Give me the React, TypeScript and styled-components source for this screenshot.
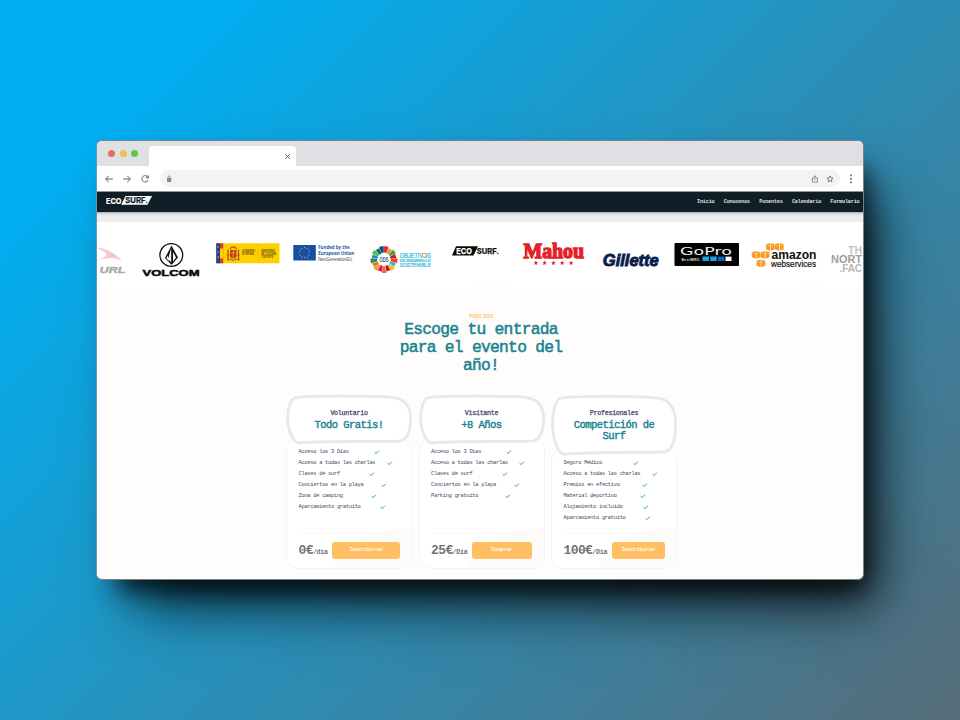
import React from "react";
import styled, { createGlobalStyle } from "styled-components";

const Global = createGlobalStyle`
  * { box-sizing: border-box; }
  html, body { margin: 0; padding: 0; }
  body { font-family: "Liberation Mono", monospace; }
`;

const Desktop = styled.main`
  width: 960px;
  height: 720px;
  overflow: hidden;
  padding: 140px 0 0 96px;
  background: linear-gradient(135deg, #00aff3 0%, #00aff3 12%, #536f7e 96%, #566d7a 100%);
`;

const Browser = styled.section`
  width: 768px;
  height: 440px;
  border-radius: 6px;
  box-shadow: 12px 20px 24px -10px rgba(0, 0, 0, 0.78),
    26px 38px 54px -14px rgba(0, 0, 0, 0.78);
`;

const Viewport = styled.div`
  display: flex;
  flex-direction: column;
  width: 100%;
  height: 100%;
  overflow: hidden;
  border: 1px solid #77818a;
  border-left-color: #6c98ad;
  border-radius: 6px;
  background: #fefdfb;
`;

const TabStrip = styled.div`
  display: flex;
  flex: none;
  height: 25px;
  padding: 5px 0 0 11px;
  background: #dee0e4;
`;

const Lights = styled.div`
  display: flex;
  gap: 4.6px;
  padding-top: 4px;
  width: 41px;
`;

const Light = styled.span<{ $color: string }>`
  width: 7px;
  height: 7px;
  border-radius: 50%;
  background: ${(p) => p.$color};
`;

const Tab = styled.div`
  display: flex;
  justify-content: flex-end;
  align-items: center;
  width: 147px;
  height: 20px;
  padding-right: 5px;
  border-radius: 4px 4px 0 0;
  background: #fff;
`;

const Toolbar = styled.div`
  display: flex;
  flex: none;
  align-items: center;
  height: 26px;
  padding: 0 8px 0 7px;
  background: #fff;
  border-bottom: 1px solid #8d9396;
`;

const Glyph = styled.svg`
  flex: none;
  fill: none;
  stroke: #5f6368;
  stroke-width: 1;
`;

const NavGlyphs = styled.div`
  display: flex;
  gap: 8px;
  width: 56px;
`;

const Address = styled.div`
  display: flex;
  align-items: center;
  width: 680px;
  height: 17px;
  padding: 0 6px;
  border-radius: 9px;
  background: #f1f3f4;
`;

const Spacer = styled.span`
  flex: 1;
`;

const SiteNav = styled.header`
  display: flex;
  flex: none;
  align-items: center;
  height: 20px;
  padding: 0 3.5px 0 9px;
  background: #101e28;
`;

const NavLinks = styled.nav`
  display: flex;
  flex: 1;
  justify-content: flex-end;
  gap: 9.3px;
  font-size: 5.2px;
  font-weight: 700;
  letter-spacing: -0.2px;
  line-height: 8px;
  color: #e6e0da;
`;

const NavShade = styled.div`
  flex: none;
  height: 10px;
  background: linear-gradient(#a9adaf 0, #dedede 2px, #ececec 4px, #eee 9.5px, #fff 10px);
`;

const Sponsors = styled.section`
  flex: none;
  height: 76px;
  padding-top: 16px;
  overflow: hidden;
  background: #fff;
`;

const Track = styled.div`
  display: flex;
  width: 843px;
  margin-left: -40.6px;
`;

const Logo = styled.svg`
  flex: none;
  width: 76.6px;
  height: 44px;
  overflow: visible;
  font-family: "Liberation Sans", sans-serif;
`;

const Wave = styled.svg`
  display: block;
  flex: none;
  width: 100%;
  height: 12px;
  margin-top: -12px;
`;

const Intro = styled.section`
  flex: none;
  padding: 14.5px 0 0 2px;
  text-align: center;
  height: 97px;
`;

const Kicker = styled.p`
  margin: 0;
  font-size: 6px;
  line-height: 8px;
  font-weight: 700;
  letter-spacing: -0.2px;
  color: #ffc982;
`;

const Heading = styled.h1`
  width: 180px;
  margin: 0 auto;
  font-size: 16.3px;
  line-height: 18px;
  font-weight: 400;
  letter-spacing: -0.73px;
  -webkit-text-stroke: 0.5px #168391;
  color: #168391;
`;

const Plans = styled.section`
  display: flex;
  gap: 6.5px;
  height: 174px;
  padding-left: 189px;
`;

const Plan = styled.article`
  position: relative;
  display: flex;
  flex-direction: column;
  width: 126px;
  height: 174px;
`;

const Body = styled.div<{ $top: number }>`
  position: absolute;
  inset: ${(p) => p.$top}px 0 0 0;
  overflow: hidden;
  border: 1px solid #f5f4f3;
  border-radius: 12px;
  background: #fff;

  &::after {
    content: "";
    position: absolute;
    left: 42px;
    bottom: -84px;
    width: 150px;
    height: 124px;
    border-radius: 50%;
    background: #fdfcfb;
  }
`;

const PlanHead = styled.header<{ $height: number }>`
  position: relative;
  flex: none;
  height: ${(p) => p.$height}px;
  padding-top: 13.5px;
  text-align: center;
`;

const Blob = styled.svg`
  position: absolute;
  inset: 0;
  width: 100%;
  height: 100%;
  overflow: visible;
`;

const Audience = styled.p`
  position: relative;
  margin: 0;
  font-size: 6.7px;
  line-height: 9px;
  font-weight: 400;
  letter-spacing: -0.29px;
  -webkit-text-stroke: 0.25px #4b4763;
  color: #4b4763;
`;

const PlanTitle = styled.h2`
  position: relative;
  width: 100px;
  margin: 2px auto 0;
  font-size: 10.5px;
  line-height: 11px;
  font-weight: 400;
  letter-spacing: -0.55px;
  -webkit-text-stroke: 0.4px #168391;
  color: #168391;
`;

const Features = styled.ul`
  position: relative;
  flex: 1;
  margin: 0;
  padding: 2.5px 0 0 12.5px;
  list-style: none;
`;

const Feature = styled.li<{ $mark: number }>`
  display: grid;
  grid-template-columns: ${(p) => p.$mark}px 6px;
  align-items: center;
  height: 11.05px;
  font-size: 5.4px;
  letter-spacing: -0.28px;
  white-space: nowrap;
  color: #4b4763;
`;

const Purchase = styled.footer`
  position: relative;
  display: flex;
  align-items: center;
  justify-content: space-between;
  height: 35px;
  margin: 0 12.5px 1px 12.5px;
  border-top: 1px solid #f8f7f6;
  padding-bottom: 2px;
`;

const Price = styled.strong`
  font-size: 13px;
  line-height: 14px;
  letter-spacing: -0.6px;
  color: #737371;
  white-space: nowrap;
  padding-top: 3px;
`;

const Unit = styled.small`
  font-size: 6.7px;
  letter-spacing: -0.3px;
`;

const Action = styled.button<{ $width: number }>`
  width: ${(p) => p.$width}px;
  height: 17px;
  padding: 0 0 1px;
  border: 0;
  border-radius: 3px;
  background: #ffc064;
  color: #fff6e9;
  font: 700 5.6px/16px "Liberation Mono", monospace;
  letter-spacing: -0.36px;
`;

const Check = () => (
  <svg width="6" height="6" viewBox="0 0 6 6">
    <path d="M.6 3.2 2.1 4.6 4.9 1.7" fill="none" stroke="#2bb18a" strokeWidth="1" />
  </svg>
);

const EcoLogo = () => (
  <svg width="48" height="12" viewBox="0 0 48 12" fontFamily="Inter, sans-serif" fontWeight="700">
    <text x="0" y="7.9" fontSize="8" fill="#fff" stroke="#fff" strokeWidth=".2" textLength="15.5" lengthAdjust="spacingAndGlyphs">ECO</text>
    <path d="M19.5 0H46L41.5 8.8H15.2Z" fill="#fff" />
    <text x="19.3" y="7.3" fontSize="7.8" fill="#101e28" stroke="#101e28" strokeWidth=".25" textLength="22.5" lengthAdjust="spacingAndGlyphs">SURF.</text>
  </svg>
);

const odsColors = ["#e5243b", "#dda63a", "#4c9f38", "#c5192d", "#ff3a21", "#26bde2", "#fcc30b", "#a21942", "#fd6925", "#dd1367", "#fd9d24", "#bf8b2e", "#3f7e44", "#0a97d9", "#56c02b", "#00689d", "#19486a"];

const star = (cx: number, cy: number, r: number) =>
  Array.from({ length: 10 }, (_, i) => {
    const a = (i * Math.PI) / 5 - Math.PI / 2;
    const q = i % 2 ? r * 0.4 : r;
    return `${cx + q * Math.cos(a)},${cy + q * Math.sin(a)}`;
  }).join(" ");

const Cube = ({ x, y }: { x: number; y: number }) => (
  <g transform={`translate(${x} ${y})`}>
    <path d="M0 1.2 4 0V7.8L0 6.3Z" fill="#f79a1d" />
    <path d="M4.7 0 8.7 1.2V6.3L4.7 7.8Z" fill="#f79a1d" />
    <path d="M0 1.9 4.3 2.9 8.7 1.9" stroke="#ffe0b0" strokeWidth=".4" fill="none" />
  </g>
);

const SponsorRow = () => (
  <Track>
    <Logo>
      <path d="M40 9.5C50 10 60 15 66 23.5 59 19 51 19 40 23 53 18 55 16 40 9.5" fill="#f6c9cc" />
      <text x="43.5" y="34.7" fontSize="9.5" fontWeight="700" fontStyle="italic" fill="#aaa" stroke="#aaa" strokeWidth=".4" textLength="26" lengthAdjust="spacingAndGlyphs">URL</text>
    </Logo>
    <Logo>
      <circle cx="38.3" cy="17" r="11.4" fill="#fff" stroke="#111" strokeWidth="1.3" />
      <path d="M38.5 7.5 45 19.5 38.5 27 32 20Z" fill="#111" />
      <path d="M38.2 10 35.2 20.6 38.2 24.6ZM40 14 43 19.5 40 23.5ZM34.5 17.5 33.5 20 36.5 24Z" fill="#fff" />
      <text x="9.5" y="37.6" fontSize="9" fontWeight="700" fill="#090909" stroke="#090909" strokeWidth=".5" textLength="57" lengthAdjust="spacingAndGlyphs">VOLCOM</text>
    </Logo>
    <Logo>
      <rect x="6.2" y="5.3" width="63.3" height="20" fill="#ffd000" />
      <rect x="6.2" y="5.3" width="3.8" height="20" fill="#263b91" />
      <path d="M10 5.3h3.2v20H10z" fill="#e3342f" />
      <path d="M10 10.5h3.2v10H10z" fill="#ffd000" />
      <path d="M8 8v2M8 13v2M8 18v2" stroke="#d8ce49" strokeWidth=".8" />
      <path d="M20 12h6.5v7q-3.2 3.2-6.5 0z" fill="#c43c22" />
      <path d="M18 11.5v10.5M28.5 11.5v10.5M20 10.8q3.2-4 6.5 0M16.7 17h2.6M27 17h2.8M17 21.7h2.3M27.3 21.7h2.3" stroke="#a85224" strokeWidth="1.2" fill="none" />
      <path d="M21 15h4.5M23.2 12v8" stroke="#f2b824" strokeWidth=".7" />
      <path d="M19.7 21q3.5 3 7 0" stroke="#763d2b" strokeWidth=".8" fill="none" />
      <g fontSize="2.6" fill="#5c4b12" fontWeight="700">
        <text x="32" y="14.4" textLength="13" lengthAdjust="spacingAndGlyphs">GOBIERNO</text>
        <text x="32" y="17.1" textLength="12" lengthAdjust="spacingAndGlyphs">DE ESPAÑA</text>
        <text x="51.2" y="14.1" textLength="14" lengthAdjust="spacingAndGlyphs">MINISTERIO</text>
        <text x="51.2" y="16.8" textLength="15" lengthAdjust="spacingAndGlyphs">DE CULTURA</text>
        <text x="51.2" y="19.5" textLength="12" lengthAdjust="spacingAndGlyphs">Y DEPORTE</text>
      </g>
      <path d="M48 6v18" stroke="#d5aa00" strokeWidth=".4" />
    </Logo>
    <Logo>
      <rect x="7.3" y="7" width="22.5" height="15.5" fill="#164fa3" />
      {Array.from({ length: 12 }, (_, i) => (
        <circle key={i} cx={18.5 + 5.1 * Math.cos((i * Math.PI) / 6)} cy={14.7 + 5.1 * Math.sin((i * Math.PI) / 6)} r=".55" fill="#d9d34c" />
      ))}
      <g fill="#2259a8" fontWeight="700" fontSize="5" fontFamily="Open Sans, sans-serif">
        <text x="32.2" y="11" textLength="31.5" lengthAdjust="spacingAndGlyphs">Funded by the</text>
        <text x="32.2" y="16.8" textLength="36" lengthAdjust="spacingAndGlyphs">European Union</text>
      </g>
      <text x="32.2" y="22.5" fontSize="4.5" fill="#4b4b4b" textLength="34" lengthAdjust="spacingAndGlyphs">NextGenerationEU</text>
    </Logo>
    <Logo>
      {odsColors.map((c, i) => (
        <path key={c} d={i % 2 ? "M-1.1-6.4-2.1-12.2H2.1L1.1-6.4Z" : "M-1.15-6.8-2.3-13.4H2.3L1.15-6.8Z"} fill={c} transform={`translate(21 21.5) rotate(${i * 21.18 + 10})`} />
      ))}
      <text x="16.6" y="24.2" fontSize="7.5" fontWeight="700" fill="#155b87" textLength="8.8" lengthAdjust="spacingAndGlyphs">ODS</text>
      <g fill="#36bde0" fontFamily="Roboto, sans-serif" stroke="#36bde0" strokeWidth=".2">
        <text x="36.8" y="19.5" fontSize="6.5" textLength="31" lengthAdjust="spacingAndGlyphs">OBJETIVOS</text>
        <text x="37" y="24.2" fontSize="4.2" textLength="30.5" lengthAdjust="spacingAndGlyphs">DE DESARROLLO</text>
        <text x="36.8" y="29" fontSize="6" textLength="31" lengthAdjust="spacingAndGlyphs">SOSTENIBLE</text>
      </g>
      <circle cx="61.4" cy="17.2" r="2" fill="#fff" stroke="#e8893f" strokeWidth=".8" />
    </Logo>
    <Logo>
      <path d="M17 8.3H39L34.5 17.5H13Z" fill="#080808" />
      <g fontFamily="Inter, sans-serif" fontWeight="700" strokeWidth=".25">
        <text x="17.3" y="15.8" fontSize="8" fill="#fff" stroke="#fff" textLength="15.5" lengthAdjust="spacingAndGlyphs">ECO</text>
        <text x="37.7" y="15.8" fontSize="8" fill="#111" stroke="#111" textLength="22.2" lengthAdjust="spacingAndGlyphs">SURF.</text>
      </g>
    </Logo>
    <Logo>
      <text x="7.5" y="20" fontFamily="Liberation Serif, serif" fontSize="20.5" fontWeight="700" fill="#e4202a" stroke="#e4202a" strokeWidth="1.3" textLength="60.5" lengthAdjust="spacingAndGlyphs">Mahou</text>
      {[19.9, 28.6, 37.4, 46.2, 55.1].map((x) => <polygon key={x} points={star(x, 25, 2.7)} fill="#e4202a" />)}
    </Logo>
    <Logo>
      <text x="9.8" y="27.6" fontSize="16.2" fontWeight="700" fontStyle="italic" fill="#081e4b" stroke="#081e4b" strokeWidth=".9" textLength="56" lengthAdjust="spacingAndGlyphs">Gillette</text>
    </Logo>
    <Logo>
      <rect x="5.5" y="5" width="64.5" height="23" rx=".8" fill="#030303" />
      <text x="11" y="17" fontFamily="DejaVu Sans, sans-serif" fontSize="11" fill="#eee" textLength="52" lengthAdjust="spacingAndGlyphs">GoPro</text>
      <text x="12.5" y="22.7" fontSize="4.2" fontWeight="700" fill="#ddd" textLength="18.5" lengthAdjust="spacingAndGlyphs">Be a HERO.</text>
      <path d="M33.5 18.6H40v4.4h-6.5zM41.2 18.6h6.5v4.4h-6.5z" fill="#16a5e5" /><path d="M48.9 18.6h6.6v4.4h-6.6z" fill="#1262b1" /><path d="M56.5 18.6h6v4.4h-6z" fill="#fff" />
    </Logo>
    <Logo>
      <Cube x={20} y={5} /><Cube x={29} y={5} /><Cube x={5.8} y={13} /><Cube x={14.8} y={13} /><Cube x={10.6} y={21.5} />
      <text x="25.5" y="21" fontSize="13" fontWeight="700" fill="#111" textLength="45" lengthAdjust="spacingAndGlyphs">amazon</text>
      <text x="25" y="29.2" fontSize="9" fill="#111" stroke="#111" strokeWidth=".2" textLength="45" lengthAdjust="spacingAndGlyphs">webservices</text>
    </Logo>
    <Logo fontWeight="700" fontSize="10.8">
      <text x="26" y="16" fill="#c3c3c3" textLength="14" lengthAdjust="spacingAndGlyphs">TH</text>
      <text x="9" y="25" fill="#9e9e9e" textLength="31" lengthAdjust="spacingAndGlyphs">NORT</text>
      <text x="17.5" y="33.5" fill="#b5b5b5" textLength="22.5" lengthAdjust="spacingAndGlyphs">.FAC</text>
    </Logo>
  </Track>
);

type PlanData = {
  audience: string;
  title: string;
  tall?: boolean;
  features: [string, number][];
  price: string;
  unit: string;
  action: string;
  actionWidth: number;
};

const plans: PlanData[] = [
  {
    audience: "Voluntario", title: "Todo Gratis!",
    features: [["Acceso los 3 Dias", 75], ["Acceso a todas las charlas", 88], ["Clases de surf", 70.5], ["Conciertos en la playa", 82.5], ["Zona de camping", 72], ["Aparcamiento gratuito", 81]],
    price: "0€", unit: "/día", action: "Inscribirse", actionWidth: 67.5,
  },
  {
    audience: "Visitante", title: "+8 Años",
    features: [["Acceso los 3 Dias", 75], ["Acceso a todas las charlas", 88], ["Clases de surf", 70.5], ["Conciertos en la playa", 82.5], ["Parking gratuito", 73.5]],
    price: "25€", unit: "/Día", action: "Comprar", actionWidth: 60.5,
  },
  {
    audience: "Profesionales", title: "Competición de Surf", tall: true,
    features: [["Seguro Médico", 69.5], ["Acceso a todas las charlas", 88.5], ["Premios en efectivo", 78], ["Material deportivo", 76.5], ["Alojamiento incluido", 79.5], ["Aparcamiento gratuito", 81.5]],
    price: "100€", unit: "/Día", action: "Inscribirse", actionWidth: 53,
  },
];

const PlanCard = ({ plan }: { plan: PlanData }) => (
  <Plan>
    <Body $top={plan.tall ? 54 : 43} />
    <PlanHead $height={plan.tall ? 60 : 48.5}>
      <Blob viewBox="0 0 126 48" preserveAspectRatio="none">
        <path
          d="M8 3C16 .2 100 .6 110 3 120 5.2 125.5 13 124.5 27 124 36 121 43 115 45.3 108 46.5 27 45.2 14 47.5 5 47.8.5 28 1.8 20 2.4 12 4 6 8 3Z"
          fill="#fff" stroke="#e8e8e7" strokeWidth="2.8" vectorEffect="non-scaling-stroke"
        />
      </Blob>
      <Audience>{plan.audience}</Audience>
      <PlanTitle>{plan.title}</PlanTitle>
    </PlanHead>
    <Features>
      {plan.features.map(([label, mark]) => (
        <Feature key={label} $mark={mark}><span>{label}</span><Check /></Feature>
      ))}
    </Features>
    <Purchase>
      <Price>{plan.price}<Unit>{plan.unit}</Unit></Price>
      <Action $width={plan.actionWidth}>{plan.action}</Action>
    </Purchase>
  </Plan>
);

export default function App() {
  return (
    <Desktop>
      <Global />
      <Browser>
        <Viewport>
          <TabStrip>
            <Lights><Light $color="#ec6a5e" /><Light $color="#f4bd4f" /><Light $color="#61c354" /></Lights>
            <Tab><Glyph width="7" height="7" viewBox="0 0 7 7"><path d="m1.3 1.3 4.4 4.4m0-4.4L1.3 5.7" /></Glyph></Tab>
          </TabStrip>
          <Toolbar>
            <NavGlyphs>
              <Glyph width="10" height="10" viewBox="0 0 10 10"><path d="M8.8 5H1.7M4.8 1.8 1.6 5l3.2 3.2" /></Glyph>
              <Glyph width="10" height="10" viewBox="0 0 10 10"><path d="M1.2 5h7.1M5.2 1.8 8.4 5 5.2 8.2" /></Glyph>
              <Glyph width="10" height="10" viewBox="0 0 10 10"><path d="M8 3.4A3.2 3.2 0 1 0 8.1 6M8.3 1.4v2.5H5.8" /></Glyph>
            </NavGlyphs>
            <Address>
              <svg width="6" height="8" viewBox="0 0 6 8"><path d="M1 3h4.3v4H1z" fill="#85898d" /><path d="M2 3V2a1.1 1.1 0 0 1 2.2 0v1" fill="none" stroke="#85898d" strokeWidth=".8" /></svg>
              <Spacer />
              <Glyph width="8" height="8" viewBox="0 0 8 8"><path d="M2.7 3H1.3v4.1h5.1V3H5M3.9 5V.9M2.5 2.1 3.9.8l1.4 1.3" strokeWidth=".7" /></Glyph>
              <Glyph width="15" height="8" viewBox="0 0 15 8"><path d="m11 .9.9 2 2.2.2-1.7 1.5.5 2.2-1.9-1.2-1.9 1.2.5-2.2-1.7-1.5 2.2-.2Z" strokeWidth=".8" /></Glyph>
            </Address>
            <Spacer />
            <svg width="8" height="10" viewBox="0 0 8 10" fill="#55595e"><circle cx="4" cy="1.4" r=".9" /><circle cx="4" cy="4.9" r=".9" /><circle cx="4" cy="8.4" r=".9" /></svg>
          </Toolbar>
          <SiteNav>
            <EcoLogo />
            <NavLinks><span>Inicio</span><span>Conocenos</span><span>Ponentes</span><span>Calendario</span><span>Formulario</span></NavLinks>
          </SiteNav>
          <NavShade />
          <Sponsors><SponsorRow /></Sponsors>
          <Wave viewBox="0 0 765 12" preserveAspectRatio="none">
            <path d="M0 9C60 1 105 1 150 5 260 12 310 9 365 2 410-1 440 4 480 3 560 9 620 10 680 3 720-2 735 4 765 1V12H0Z" fill="#fefdfb" />
          </Wave>
          <Intro>
            <Kicker>PRECIOS</Kicker>
            <Heading>Escoge tu entrada para el evento del año!</Heading>
          </Intro>
          <Plans>{plans.map((p) => <PlanCard key={p.audience} plan={p} />)}</Plans>
        </Viewport>
      </Browser>
    </Desktop>
  );
}
